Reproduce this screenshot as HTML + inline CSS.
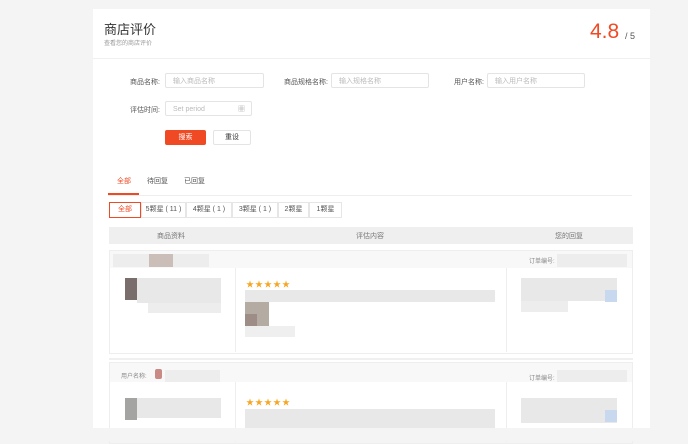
<!DOCTYPE html><html><head><meta charset="utf-8"><style>
body{margin:0;width:688px;height:441px;background:#f4f4f4;position:relative;overflow:hidden;font-family:"Liberation Sans","Noto Sans CJK SC",sans-serif;color:#333}
.a{position:absolute}
.card{left:93px;top:9px;width:557px;height:419px;background:#fff}
.lbl{font-size:7px;color:#555;text-align:right}
.inp{border:1px solid #e4e4e4;border-radius:2px;height:15px;font-size:7px;color:#bbb;line-height:15px;padding-left:7px;box-sizing:border-box;background:#fff}
.b{background:#e8e8e8}
.st{color:#f5a623;font-size:8px;letter-spacing:1px}
.fb{border:1px solid #e6e6e6;height:16px;box-sizing:border-box;font-size:7px;line-height:14px;text-align:center;color:#555}
</style></head><body>
<div class="a card"></div>
<div class="a" style="left:104px;top:19px;font-size:13px;color:#333">商店评价</div>
<div class="a" style="left:104px;top:38px;font-size:6px;color:#999">查看您的商店评价</div>
<div class="a" style="left:590px;top:20px;font-size:21px;color:#f04a24">4.8</div>
<div class="a" style="left:625px;top:31px;font-size:9px;color:#555">/ 5</div>
<div class="a" style="left:93px;top:58px;width:557px;height:1px;background:#f0f0f0"></div>

<div class="a lbl" style="left:110px;top:77px;width:50px">商品名称:</div>
<div class="a inp" style="left:165px;top:73px;width:99px">输入商品名称</div>
<div class="a lbl" style="left:270px;top:77px;width:58px">商品规格名称:</div>
<div class="a inp" style="left:331px;top:73px;width:98px">输入规格名称</div>
<div class="a lbl" style="left:430px;top:77px;width:54px">用户名称:</div>
<div class="a inp" style="left:487px;top:73px;width:98px">输入用户名称</div>
<div class="a lbl" style="left:110px;top:105px;width:50px">评估时间:</div>
<div class="a inp" style="left:165px;top:101px;width:87px">Set period<span style="position:absolute;right:6px;top:0;color:#aaa">▦</span></div>
<div class="a" style="left:165px;top:130px;width:41px;height:15px;background:#f04a24;border-radius:2px;color:#fff;font-size:7px;line-height:15px;text-align:center">搜索</div>
<div class="a" style="left:213px;top:130px;width:38px;height:15px;border:1px solid #e4e4e4;box-sizing:border-box;border-radius:2px;font-size:7px;line-height:13px;text-align:center">重设</div>

<div class="a" style="left:117px;top:176px;font-size:7px;color:#f04a24">全部</div>
<div class="a" style="left:147px;top:176px;font-size:7px;color:#555">待回复</div>
<div class="a" style="left:184px;top:176px;font-size:7px;color:#555">已回复</div>
<div class="a" style="left:108px;top:195px;width:524px;height:1px;background:#eee"></div>
<div class="a" style="left:108px;top:193px;width:31px;height:2px;background:#f04a24"></div>

<div class="a fb" style="left:109px;top:202px;width:32px;border-color:#f04a24;color:#f04a24">全部</div>
<div class="a fb" style="left:141px;top:202px;width:45px">5颗星 ( 11 )</div>
<div class="a fb" style="left:186px;top:202px;width:46px">4颗星 ( 1 )</div>
<div class="a fb" style="left:232px;top:202px;width:46px">3颗星 ( 1 )</div>
<div class="a fb" style="left:278px;top:202px;width:31px">2颗星</div>
<div class="a fb" style="left:309px;top:202px;width:33px">1颗星</div>

<div class="a" style="left:109px;top:227px;width:524px;height:17px;background:#efefef"></div>
<div class="a" style="left:157px;top:231px;font-size:7px;color:#777">商品资料</div>
<div class="a" style="left:356px;top:231px;font-size:7px;color:#777">评估内容</div>
<div class="a" style="left:555px;top:231px;font-size:7px;color:#777">您的回复</div>

<!-- row1 -->
<div class="a" style="left:109px;top:250px;width:522px;height:102px;border:1px solid #eee"></div>
<div class="a" style="left:110px;top:251px;width:522px;height:17px;background:#f8f8f8"></div>
<div class="a b" style="left:113px;top:254px;width:96px;height:13px;opacity:.7"></div>
<div class="a" style="left:149px;top:254px;width:24px;height:13px;background:#cbbdb7"></div>
<div class="a" style="left:529px;top:256px;font-size:6px;color:#888">订单编号:</div>
<div class="a b" style="left:557px;top:254px;width:70px;height:13px;opacity:.7"></div>
<div class="a" style="left:235px;top:268px;width:1px;height:84px;background:#eee"></div>
<div class="a" style="left:506px;top:268px;width:1px;height:84px;background:#eee"></div>
<div class="a" style="left:125px;top:278px;width:12px;height:22px;background:#7a6e6c"></div>
<div class="a b" style="left:137px;top:278px;width:84px;height:25px"></div>
<div class="a b" style="left:148px;top:303px;width:73px;height:10px;opacity:.8"></div>
<div class="a st" style="left:246px;top:279px">★★★★★</div>
<div class="a b" style="left:245px;top:290px;width:250px;height:12px"></div>
<div class="a" style="left:245px;top:302px;width:24px;height:24px;background:#b4aca2"></div>
<div class="a" style="left:245px;top:314px;width:12px;height:12px;background:#9e8c86"></div>
<div class="a b" style="left:245px;top:326px;width:50px;height:11px;opacity:.7"></div>
<div class="a b" style="left:521px;top:278px;width:96px;height:23px"></div>
<div class="a" style="left:605px;top:290px;width:12px;height:12px;background:#c7d8ef"></div>
<div class="a b" style="left:521px;top:301px;width:47px;height:11px;opacity:.8"></div>

<!-- row2 -->
<div class="a" style="left:109px;top:358px;width:524px;height:2px;background:#f0f0f0"></div>
<div class="a" style="left:109px;top:362px;width:522px;height:80px;border:1px solid #eee"></div>
<div class="a" style="left:110px;top:363px;width:522px;height:19px;background:#f8f8f8"></div>
<div class="a" style="left:121px;top:371px;font-size:6px;color:#888">用户名称:</div>
<div class="a" style="left:155px;top:369px;width:7px;height:10px;background:#c98a86;border-radius:2px"></div>
<div class="a b" style="left:165px;top:370px;width:55px;height:12px;opacity:.7"></div>
<div class="a" style="left:529px;top:373px;font-size:6px;color:#888">订单编号:</div>
<div class="a b" style="left:557px;top:370px;width:70px;height:12px;opacity:.7"></div>
<div class="a" style="left:235px;top:382px;width:1px;height:60px;background:#eee"></div>
<div class="a" style="left:506px;top:382px;width:1px;height:60px;background:#eee"></div>
<div class="a" style="left:125px;top:398px;width:12px;height:22px;background:#a4a4a2"></div>
<div class="a b" style="left:137px;top:398px;width:84px;height:20px"></div>
<div class="a st" style="left:246px;top:397px">★★★★★</div>
<div class="a b" style="left:245px;top:409px;width:250px;height:19px"></div>
<div class="a b" style="left:521px;top:398px;width:96px;height:25px"></div>
<div class="a" style="left:605px;top:410px;width:12px;height:12px;background:#c7d8ef"></div>
<div class="a" style="left:0;top:428px;width:688px;height:13px;background:#f4f4f4"></div>
</body></html>
